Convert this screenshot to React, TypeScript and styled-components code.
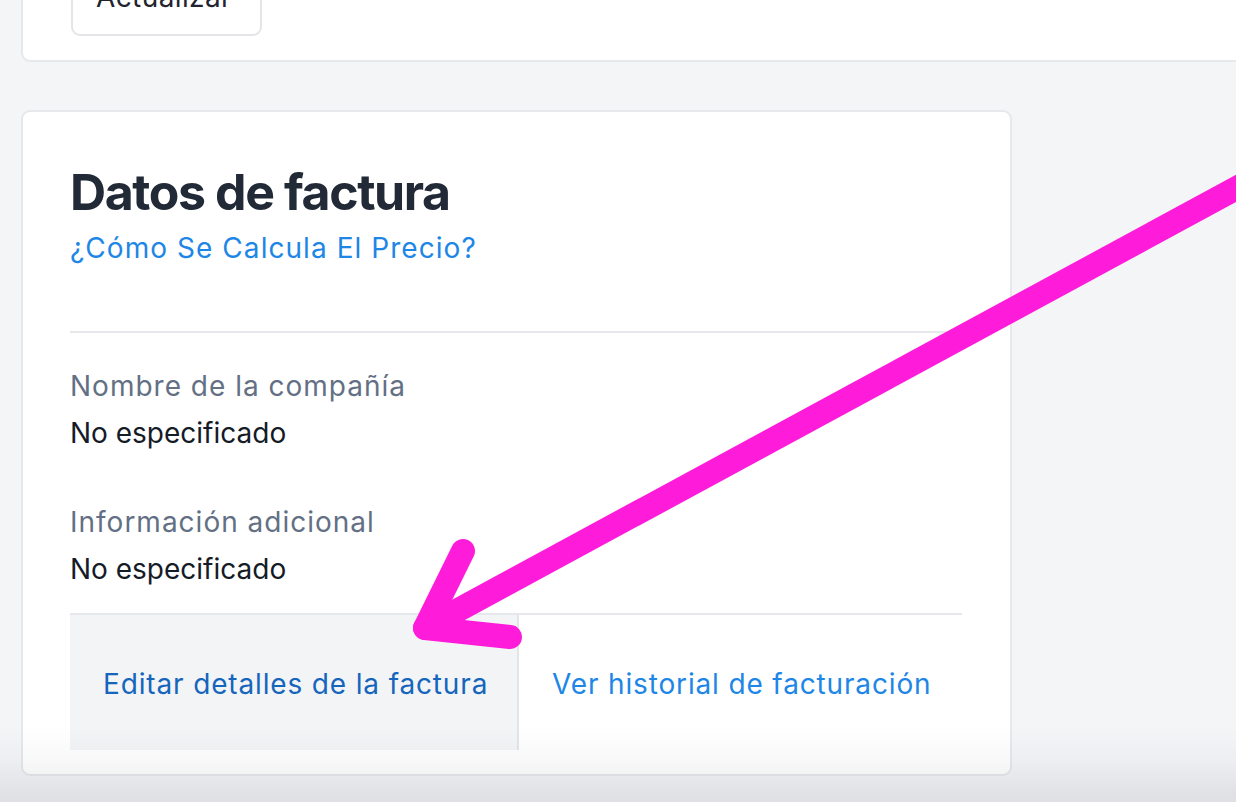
import React from "react";
import styled, { createGlobalStyle } from "styled-components";

const GlobalStyle = createGlobalStyle`
  html, body {
    margin: 0;
    padding: 0;
    background: #f4f5f7;
    overflow: hidden;
    font-family: Inter, "Noto Sans", "Liberation Sans", sans-serif;
    -webkit-font-smoothing: antialiased;
  }
`;

const Page = styled.main`
  padding: 0 0 0 21px;
  margin-top: -43px;
  display: flex;
  flex-direction: column;
  gap: 48px;
  width: 1300px;
`;

const TopCard = styled.section`
  width: 1300px;
  background: #ffffff;
  border: 2px solid #e6e8ec;
  border-radius: 9px;
  padding: 0 0 24px 48px;
  box-sizing: border-box;
  display: flex;
`;

const OutlineButton = styled.button`
  font-family: inherit;
  font-size: 28px;
  letter-spacing: 0.4px;
  color: #1f2430;
  background: #ffffff;
  border: 2px solid #e3e5e9;
  border-radius: 9px;
  padding: 20px 28px 20px 23px;
  line-height: 33px;
`;

const Card = styled.section`
  width: 991px;
  box-sizing: border-box;
  background: #ffffff;
  border: 2px solid #e6e8ec;
  border-radius: 9px;
  padding: 52px 48px 24px 47px;
  display: flex;
  flex-direction: column;
`;

const Title = styled.h2`
  margin: 0;
  font-size: 50px;
  line-height: 56px;
  font-weight: 700;
  color: #222a37;
  letter-spacing: -1.4px;
`;

const HelpLink = styled.a`
  margin-top: 8px;
  font-size: 28px;
  line-height: 40px;
  letter-spacing: 1.05px;
  color: #1d86e6;
  text-decoration: none;
`;

const Divider = styled.hr`
  margin: 63px 0 0;
  border: none;
  border-top: 2px solid #e6e8ec;
  width: 100%;
`;

const Field = styled.div<{ $gap: number }>`
  margin-top: ${(p) => p.$gap}px;
  display: flex;
  flex-direction: column;
  gap: 7px;
`;

const Label = styled.span`
  font-size: 28px;
  line-height: 40px;
  letter-spacing: 1px;
  color: #637084;
`;

const Value = styled.span`
  font-size: 28px;
  line-height: 40px;
  color: #151b27;
`;

const ActionRow = styled.div`
  margin-top: 24px;
  display: grid;
  grid-template-columns: 449px 1fr;
  border-top: 2px solid #e6e8ec;
  height: 137px;
  box-sizing: border-box;
`;

const ActionButton = styled.a<{ $primary?: boolean }>`
  display: flex;
  align-items: center;
  padding-left: 33px;
  padding-top: 2px;
  font-size: 28px;
  letter-spacing: 0.85px;
  color: ${(p) => (p.$primary ? "#1565bd" : "#1d86e6")};
  background: ${(p) => (p.$primary ? "#f3f4f6" : "#ffffff")};
  border-right: ${(p) => (p.$primary ? "2px solid #e3e5e9" : "none")};
  text-decoration: none;
`;

const BottomFade = styled.div`
  position: fixed;
  left: 0;
  right: 0;
  bottom: 0;
  height: 75px;
  pointer-events: none;
  background: linear-gradient(
    to bottom,
    rgba(30, 35, 50, 0) 0%,
    rgba(30, 35, 50, 0.03) 45%,
    rgba(30, 35, 50, 0.1) 100%
  );
`;

const ArrowLayer = styled.svg`
  position: fixed;
  inset: 0;
  width: 1236px;
  height: 802px;
  pointer-events: none;
`;

export default function App() {
  return (
    <>
      <GlobalStyle />
      <Page>
        <TopCard>
          <OutlineButton>Actualizar</OutlineButton>
        </TopCard>
        <Card>
          <Title>Datos de factura</Title>
          <HelpLink href="#">¿Cómo Se Calcula El Precio?</HelpLink>
          <Divider />
          <Field $gap={33}>
            <Label>Nombre de la compañía</Label>
            <Value>No especificado</Value>
          </Field>
          <Field $gap={49}>
            <Label>Información adicional</Label>
            <Value>No especificado</Value>
          </Field>
          <ActionRow>
            <ActionButton $primary href="#">
              Editar detalles de la factura
            </ActionButton>
            <ActionButton href="#">Ver historial de facturación</ActionButton>
          </ActionRow>
        </Card>
      </Page>
      <BottomFade />
      <ArrowLayer viewBox="0 0 1236 802">
        <g
          fill="none"
          stroke="#ff14d9"
          strokeWidth={24}
          strokeLinecap="round"
          strokeLinejoin="round"
          opacity={0.97}
        >
          <path d="M 1270 170 L 425 628" />
          <path d="M 463 551 L 425 628 L 510 637" />
        </g>
      </ArrowLayer>
    </>
  );
}
